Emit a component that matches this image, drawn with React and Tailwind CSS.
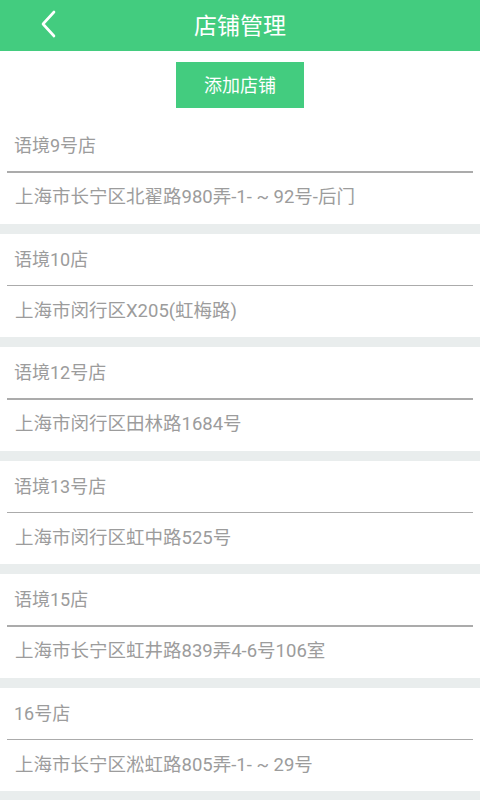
import React from 'react';

const stores = [
  { name: '语境9号店', address: '上海市长宁区北翟路980弄-1- ~ 92号-后门' },
  { name: '语境10店', address: '上海市闵行区X205(虹梅路)' },
  { name: '语境12号店', address: '上海市闵行区田林路1684号' },
  { name: '语境13号店', address: '上海市闵行区虹中路525号' },
  { name: '语境15店', address: '上海市长宁区虹井路839弄4-6号106室' },
  { name: '16号店', address: '上海市长宁区淞虹路805弄-1- ~ 29号' },
];

function StoreCard({ store }) {
  return (
    <div className="bg-white">
      <div className="h-[51px] flex items-center px-[14px] text-[18px] text-[#9c9c9c]">
        {store.name}
      </div>
      <div className="mx-[7px] h-[1.5px] bg-[#ababab]" />
      <div className="h-[51px] flex items-center px-[15px] text-[18.5px] text-[#9c9c9c]">
        {store.address}
      </div>
    </div>
  );
}

export default function App() {
  return (
    <div
      className="w-[480px] min-h-[800px] bg-[#e9eded]"
      style={{ fontFamily: 'Roboto, "Noto Sans CJK SC", sans-serif' }}
    >
      <div className="relative h-[51px] bg-[#43cc7f] flex items-center justify-center">
        <button className="absolute left-[36px] top-[8px] w-[24px] h-[32px] flex items-center justify-center">
          <svg width="20" height="30" viewBox="0 0 20 30" fill="none">
            <path d="M16 3 L5 15 L16 27" stroke="white" strokeWidth="2.6" strokeLinecap="round" strokeLinejoin="round" />
          </svg>
        </button>
        <h1 className="text-[23px] text-white leading-none pt-[2px]">店铺管理</h1>
      </div>
      <div className="bg-white pt-[11px] pb-[12px] flex justify-center">
        <button className="w-[128px] h-[46px] bg-[#43cc7f] text-white text-[18px]">
          添加店铺
        </button>
      </div>
      <div className="flex flex-col gap-[10px]">
        {stores.map((s) => (
          <StoreCard key={s.name} store={s} />
        ))}
      </div>
    </div>
  );
}
